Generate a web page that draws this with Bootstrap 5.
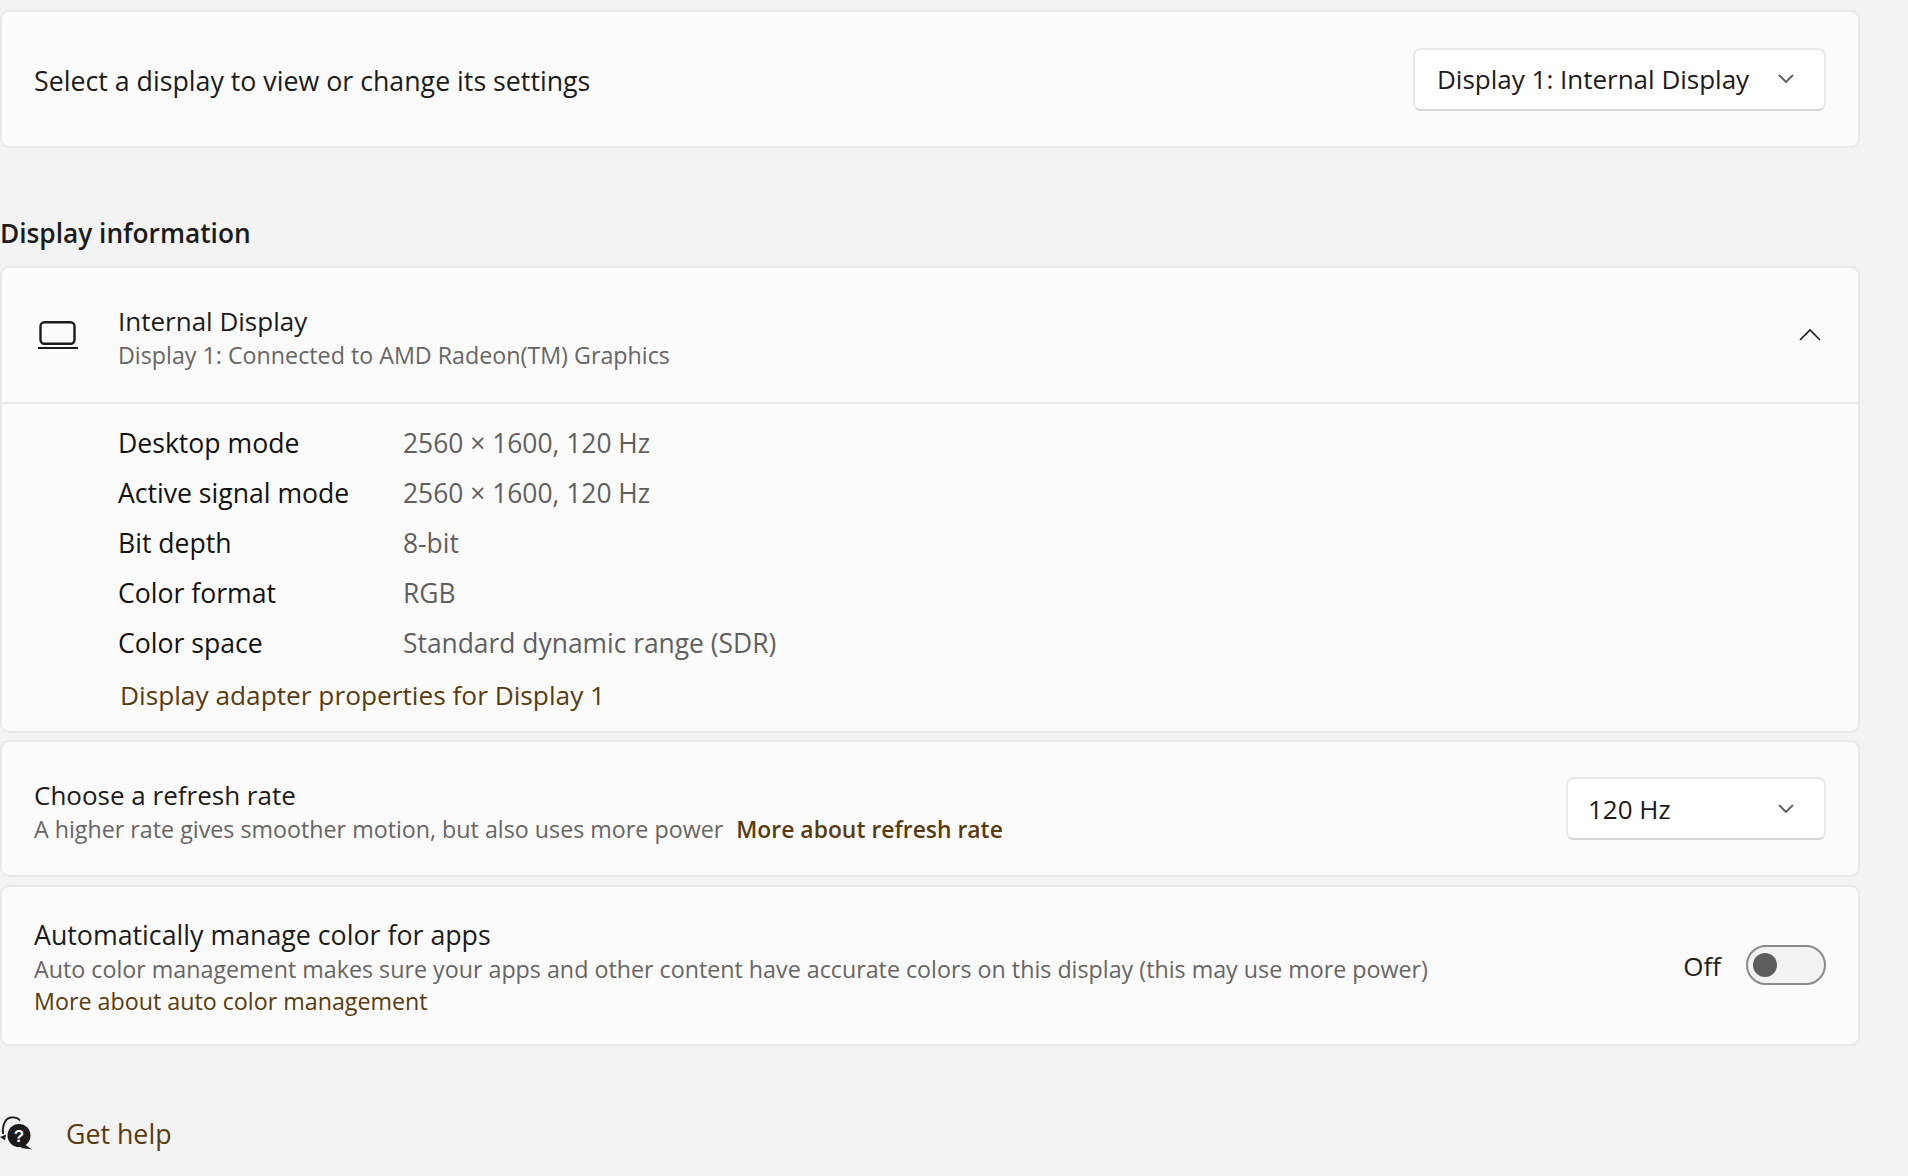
<!DOCTYPE html>
<html lang="en">
<head>
<meta charset="utf-8">
<title>Display settings</title>
<link href="https://cdn.jsdelivr.net/npm/bootstrap@5.3.0/dist/css/bootstrap.min.css" rel="stylesheet">
<style>
html, body { height: 100%; overflow: hidden; }
body { background: #f3f3f3; color: #1b1b1b; font-family: "Open Sans", "Noto Sans", sans-serif; font-size: 26px; line-height: 36px; }
.page-wrap { width: 1860px; padding-top: 10px; }
.panel { background: #fbfbfb; border: 2px solid #e8e8e8; border-radius: 9px; }
.panel-select { height: 138px; padding: 0 32px; }
.panel-rate { height: 137px; padding: 0 32px; margin-top: 7px; }
.panel-color { height: 161px; padding: 0 32px; margin-top: 8px; }
.txt-lg { font-size: 26.75px; }
.select-label { padding-top: 4px; }
.rate-text { padding-top: 6px; }
.color-text { padding-top: 2px; }
.head-text { padding-top: 4px; }
.sec-title { font-size: 26.25px; font-weight: 600; margin: 67px 0 15px; }
.head-row { height: 136px; padding: 0 37px 0 35px; border-bottom: 2px solid #e8e8e8; }
.head-icon { width: 42px; margin-right: 39px; }
.head-chev { margin-bottom: 2px; }
.detail-body { padding: 14px 0 0 116px; height: 327px; }
.detail-row { height: 50px; display: flex; align-items: center; }
.detail-key { width: 285px; color: #111; font-size: 26.6px; }
.detail-val { color: #5f5f5f; font-size: 26.4px; }
.detail-link { display: block; margin: 9px 0 0 2px; font-size: 26.25px; }
.cap { font-size: 23.25px; line-height: 32px; color: #666; }
.brown { color: #573c11; text-decoration: none; }
.brown-b { font-size: 22.9px; font-weight: 600; margin-left: 7px; }
.combo { height: 63px; background: #fff; border: 2px solid #e9e9e9; border-bottom-color: #d6d6d6; border-radius: 8px; padding: 0 30px 0 22px; }
.combo-wide { width: 413px; }
.combo-short { width: 260px; padding-left: 20px; }
.toggle-wrap { padding-bottom: 2px; }
.toggle-track { width: 80px; height: 40px; border: 2px solid #8a8a8a; border-radius: 20px; background: #f3f3f3; padding-left: 5px; }
.toggle-knob { width: 24px; height: 24px; border-radius: 50%; background: #5d5d5d; }
.off-label { margin-right: 25px; padding-top: 2px; }
.help-row { margin-top: 68px; }
.help-icon { width: 34px; margin-right: 32px; }
.help-link { padding-top: 2px; }
</style>
</head>
<body>
<div class="page-wrap">
  <div class="panel panel-select d-flex align-items-center justify-content-between">
    <span class="txt-lg select-label">Select a display to view or change its settings</span>
    <div class="combo combo-wide d-flex align-items-center justify-content-between">
      <span>Display 1: Internal Display</span>
      <svg width="16" height="10" viewBox="0 0 16 10"><path d="M1 1l7 7 7-7" fill="none" stroke="#5d5d5d" stroke-width="1.8"/></svg>
    </div>
  </div>

  <div class="sec-title">Display information</div>

  <div class="panel">
    <div class="head-row d-flex align-items-center">
      <svg class="head-icon" width="42" height="28" viewBox="0 0 42 28"><rect x="3.500" y="1.200" width="34" height="21.600" rx="4" fill="none" stroke="#1b1b1b" stroke-width="2.400"/><path d="M1 27h40" stroke="#1b1b1b" stroke-width="2.200"/></svg>
      <div class="flex-grow-1 head-text">
        <div>Internal Display</div>
        <div class="cap">Display 1: Connected to AMD Radeon(TM) Graphics</div>
      </div>
      <svg class="head-chev" width="22" height="13" viewBox="0 0 22 13"><path d="M1 12L11 2l10 10" fill="none" stroke="#1b1b1b" stroke-width="1.6"/></svg>
    </div>
    <div class="detail-body">
      <div class="detail-row"><span class="detail-key">Desktop mode</span><span class="detail-val">2560 × 1600, 120 Hz</span></div>
      <div class="detail-row"><span class="detail-key">Active signal mode</span><span class="detail-val">2560 × 1600, 120 Hz</span></div>
      <div class="detail-row"><span class="detail-key">Bit depth</span><span class="detail-val">8-bit</span></div>
      <div class="detail-row"><span class="detail-key">Color format</span><span class="detail-val">RGB</span></div>
      <div class="detail-row"><span class="detail-key">Color space</span><span class="detail-val">Standard dynamic range (SDR)</span></div>
      <a class="brown detail-link" href="#">Display adapter properties for Display 1</a>
    </div>
  </div>

  <div class="panel panel-rate d-flex align-items-center justify-content-between">
    <div class="rate-text">
      <div>Choose a refresh rate</div>
      <div class="cap">A higher rate gives smoother motion, but also uses more power <a class="brown brown-b" href="#">More about refresh rate</a></div>
    </div>
    <div class="combo combo-short d-flex align-items-center justify-content-between">
      <span>120 Hz</span>
      <svg width="16" height="10" viewBox="0 0 16 10"><path d="M1 1l7 7 7-7" fill="none" stroke="#5d5d5d" stroke-width="1.8"/></svg>
    </div>
  </div>

  <div class="panel panel-color d-flex align-items-center justify-content-between">
    <div class="color-text">
      <div class="txt-lg">Automatically manage color for apps</div>
      <div class="cap">Auto color management makes sure your apps and other content have accurate colors on this display (this may use more power)</div>
      <div class="cap"><a class="brown" href="#">More about auto color management</a></div>
    </div>
    <div class="d-flex align-items-center toggle-wrap">
      <span class="off-label">Off</span>
      <span class="toggle-track d-flex align-items-center"><span class="toggle-knob"></span></span>
    </div>
  </div>

  <div class="help-row d-flex align-items-center">
    <svg class="help-icon" width="34" height="34" viewBox="0 0 34 34">
      <path d="M3 18C2 10 5 2 11 1.500c4-.3 7 .5 9 3" fill="none" stroke="#1b1b1b" stroke-width="1.800"/>
      <path d="M0 21l6-2.500-1 6z" fill="#1b1b1b"/>
      <circle cx="19" cy="19.500" r="11.500" fill="#1b1b1b"/>
      <path d="M24 28l8 5.500-11-1.500z" fill="#1b1b1b"/>
      <text x="19" y="25.500" text-anchor="middle" font-family="Liberation Sans, sans-serif" font-size="17" font-weight="700" fill="#fff">?</text>
    </svg>
    <a class="brown txt-lg help-link" href="#">Get help</a>
  </div>
</div>
<script src="https://cdn.jsdelivr.net/npm/bootstrap@5.3.0/dist/js/bootstrap.bundle.min.js"></script>
</body>
</html>
